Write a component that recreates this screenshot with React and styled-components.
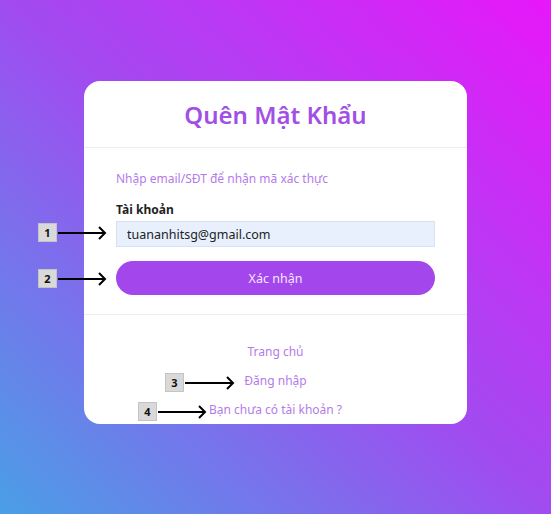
import styled, { createGlobalStyle } from "styled-components";

const Global = createGlobalStyle`
    html, body {
        margin: 0;
        padding: 0;
    }
    body {
        font-family: "Noto Sans", "Open Sans", sans-serif;
    }
`

const Stage = styled.div`
    position: relative;
    width: 551px;
    height: 514px;
    box-sizing: border-box;
    padding-top: 81px;
    display: flex;
    justify-content: center;
    align-items: flex-start;
    background: linear-gradient(to top right, #4a9fe6 0%, #a04cf0 50%, #e817fa 100%);
    overflow: hidden;
`

const Card = styled.div`
    width: 383px;
    height: 343px;
    background: #fff;
    border-radius: 16px;
    display: flex;
    flex-direction: column;
`

const Header = styled.div`
    height: 66px;
    display: flex;
    align-items: center;
    justify-content: center;
    border-bottom: 1px solid #ececec;
`

const Title = styled.h1`
    margin: 0;
    font-size: 24px;
    font-weight: 600;
    color: #a24fe6;
`

const Body = styled.div`
    padding: 22px 32px 19px;
    display: flex;
    flex-direction: column;
    border-bottom: 1px solid #ececec;
`

const Hint = styled.p`
    margin: 0 0 14px;
    font-size: 12px;
    color: #b47be9;
`

const Label = styled.label`
    font-size: 12px;
    font-weight: 700;
    color: #222;
    margin-bottom: 3px;
`

const Input = styled.input`
    height: 26px;
    box-sizing: border-box;
    border: 1px solid #d8e1f0;
    background: #e8f0fe;
    padding: 0 10px;
    font-family: inherit;
    font-size: 12.5px;
    color: #222;
    outline: none;
`

const Button = styled.button`
    margin-top: 14px;
    height: 34px;
    border: none;
    border-radius: 17px;
    background: #a347ec;
    color: #f3e6ff;
    font-family: inherit;
    font-size: 12.5px;
`

const Footer = styled.div`
    padding-top: 28px;
    display: flex;
    flex-direction: column;
    align-items: center;
    gap: 12px;
`

const Link = styled.a`
    font-size: 12px;
    line-height: 17px;
    color: #b47be9;
    text-decoration: none;
`

const Note = styled.div`
    position: absolute;
    left: ${p => p.x}px;
    top: ${p => p.y}px;
    display: flex;
    align-items: center;
`

const Badge = styled.span`
    width: 19px;
    height: 19px;
    box-sizing: border-box;
    background: #d9d9d9;
    border: 1px solid #c4c4c4;
    display: flex;
    align-items: center;
    justify-content: center;
    font-size: 11px;
    font-weight: 700;
    color: #111;
`

const Arrow = ({ length }) => (
    <svg width={length} height="14" viewBox={`0 0 ${length} 14`} style={{ flexShrink: 0 }}>
        <line x1="1" y1="7" x2={length - 2} y2="7" stroke="#000" strokeWidth="2" />
        <polyline points={`${length - 8},1 ${length - 2},7 ${length - 8},13`} fill="none" stroke="#000" strokeWidth="2" />
    </svg>
)

const notes = [
    { n: 1, x: 38, y: 223, len: 50 },
    { n: 2, x: 38, y: 269, len: 50 },
    { n: 3, x: 165, y: 373, len: 51 },
    { n: 4, x: 138, y: 402, len: 50 },
]

const App = () => {
    return (
        <>
            <Global />
            <Stage>
                <Card>
                    <Header>
                        <Title>Quên Mật Khẩu</Title>
                    </Header>
                    <Body>
                        <Hint>Nhập email/SĐT để nhận mã xác thực</Hint>
                        <Label>Tài khoản</Label>
                        <Input defaultValue="tuananhitsg@gmail.com" />
                        <Button>Xác nhận</Button>
                    </Body>
                    <Footer>
                        <Link>Trang chủ</Link>
                        <Link>Đăng nhập</Link>
                        <Link>Bạn chưa có tài khoản ?</Link>
                    </Footer>
                </Card>
                {notes.map(note => (
                    <Note key={note.n} x={note.x} y={note.y}>
                        <Badge>{note.n}</Badge>
                        <Arrow length={note.len} />
                    </Note>
                ))}
            </Stage>
        </>
    );
}

export default App;
